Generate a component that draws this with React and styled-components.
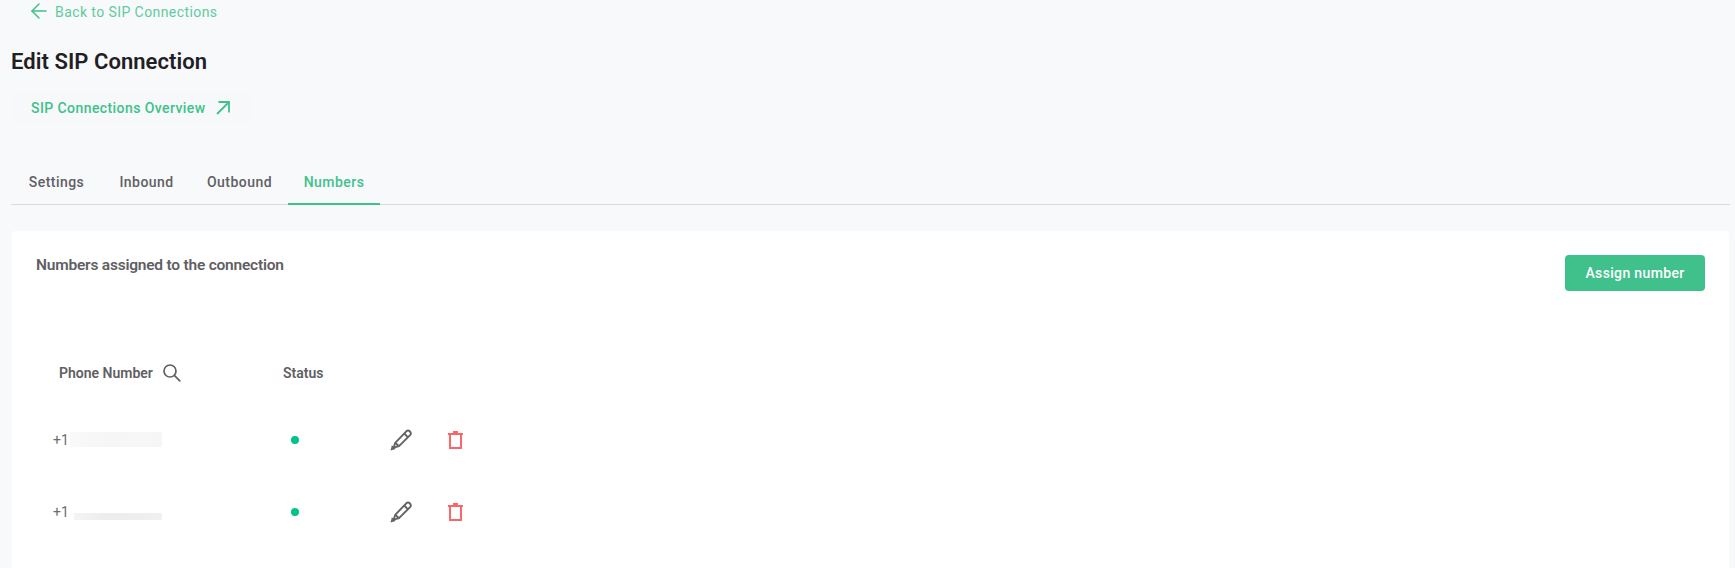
import styled, { createGlobalStyle } from 'styled-components';
import { ArrowLeft } from 'lucide-react';

const green = '#40c18c';
const grey = '#5f6063';

const GlobalStyle = createGlobalStyle`
  html, body {
    margin: 0;
    height: 100%;
    overflow: hidden;
    background: #f8f9fb;
    font-family: Roboto, "Liberation Sans", sans-serif;
  }
`;

const Page = styled.div`
  padding: 0 5px 0 11px;
  height: 568px;
  display: flex;
  flex-direction: column;
  box-sizing: border-box;
`;

const BackLink = styled.a`
  display: flex;
  align-items: center;
  gap: 4px;
  height: 24px;
  margin-left: 16px;
  color: #5fcb9f;
  font-size: 14px;
  letter-spacing: 0.42px;
  svg {
    color: ${green};
    margin-top: -3px;
  }
`;

const Title = styled.h1`
  margin: 25px 0 0;
  height: 26px;
  line-height: 26px;
  font-size: 22px;
  font-weight: 600;
  letter-spacing: 0.05px;
  color: #1f2023;
`;

const OverviewLink = styled.a`
  display: flex;
  align-items: center;
  gap: 10px;
  width: 239px;
  height: 33px;
  margin-top: 16px;
  padding-left: 20px;
  box-sizing: border-box;
  background: #f6f8f9;
  color: ${green};
  font-size: 14px;
  font-weight: 500;
  letter-spacing: 0.42px;
`;

const Tabs = styled.div`
  display: flex;
  height: 51px;
  margin-top: 29px;
  border-bottom: 1px solid #d9dadd;
  box-sizing: content-box;
`;

const Tab = styled.div`
  display: flex;
  align-items: center;
  justify-content: center;
  width: ${({ $width }) => $width}px;
  height: 52px;
  padding-top: 8px;
  box-sizing: border-box;
  font-size: 14px;
  font-weight: 500;
  letter-spacing: 0.45px;
  color: ${({ $active }) => ($active ? green : grey)};
  border-bottom: 2px solid ${({ $active }) => ($active ? green : 'transparent')};
`;

const Card = styled.section`
  flex: 1;
  margin: 26px 1px 0 1px;
  padding: 24px 24px 0 24px;
  background: #fff;
  border-radius: 4px 4px 0 0;
`;

const CardHeader = styled.div`
  display: flex;
  justify-content: space-between;
  align-items: flex-start;
`;

const CardTitle = styled.h2`
  margin: 0;
  font-size: 15.5px;
  line-height: 20px;
  font-weight: 600;
  letter-spacing: -0.22px;
  color: ${grey};
`;

const AssignButton = styled.button`
  width: 140px;
  height: 36px;
  border: 0;
  border-radius: 4px;
  background: ${green};
  color: #fff;
  font-family: inherit;
  font-size: 14px;
  font-weight: 500;
  letter-spacing: 0.35px;
`;

const Grid = styled.div`
  display: grid;
  grid-template-columns: 247px 107px 58px 58px;
  align-items: center;
`;

const HeaderRow = styled(Grid)`
  height: 40px;
  margin-top: 62px;
  font-size: 14px;
  font-weight: 600;
  color: ${grey};
`;

const PhoneHeader = styled.div`
  display: flex;
  align-items: center;
  gap: 10px;
  padding-left: 23px;
  svg {
    color: ${grey};
  }
`;

const Row = styled(Grid)`
  height: 72px;
`;

const Rows = styled.div`
  margin-top: 11px;
`;

const Phone = styled.div`
  display: flex;
  align-items: center;
  height: 22px;
  padding-left: 17px;
  font-size: 14px;
  color: #6b6c6f;
`;

const Smudge = styled.span`
  display: block;
  width: ${({ $dark }) => ($dark ? 88 : 92)}px;
  height: ${({ $dark }) => ($dark ? 7 : 15)}px;
  margin-left: ${({ $dark }) => ($dark ? 5 : 1)}px;
  margin-top: ${({ $dark }) => ($dark ? 8 : -1)}px;
  background: linear-gradient(
    90deg,
    ${({ $dark }) => ($dark ? '#f4f4f4, #ececec 40%, #eeeeee 75%, #f1f1f1' : '#f9f9f9, #f6f6f6 40%, #f7f7f7 75%, #f6f6f6')}
  );
`;

const StatusCell = styled.div`
  padding-left: 8px;
`;

const Dot = styled.span`
  display: block;
  width: 8px;
  height: 8px;
  border-radius: 50%;
  background: #00c389;
`;

const IconCell = styled.div`
  display: flex;
  align-items: center;
  svg {
    display: block;
  }
`;

const SearchGlyph = () => (
  <svg width="18" height="18" viewBox="0 0 18 18" fill="none" stroke="currentColor" strokeWidth="1.7">
    <circle cx="7" cy="7" r="6" />
    <path d="M11.3 11.3 17.3 17.3" />
  </svg>
);

const OutArrow = () => (
  <svg width="14" height="14" viewBox="0 0 14 14" fill="none" stroke="currentColor" strokeWidth="1.8">
    <path d="M1 13 13 1" />
    <path d="M2.5 1H13v10.5" />
  </svg>
);

const Pencil = () => (
  <svg width="22" height="22" viewBox="0 0 22 22" fill="none" stroke="#636365" strokeWidth="1.9" strokeLinejoin="round">
    <path d="M5.2 13.8 16.3 2.3a2.7 2.7 0 0 1 3.8 3.8L9 17.2 3.8 18.6Z" />
    <path d="M14.2 4.5l3.8 3.8M5.2 13.8 9 17.2" />
    <path d="M.5 21.5l1.4-5.2 3.8 3.8Z" fill="#636365" stroke="none" />
  </svg>
);

const Trash = () => (
  <svg width="15" height="18" viewBox="0 0 15 18" fill="none" stroke="#fd6668" strokeWidth="2">
    <path d="M0 3h15" />
    <path d="M5 1h5" />
    <path d="M2 4v13h11V4" />
  </svg>
);

const numbers = [
  { id: 1, dark: false, prefix: '+1' },
  { id: 2, dark: true, prefix: '+1' },
];

export default function App() {
  return (
    <Page>
      <GlobalStyle />
      <BackLink>
        <ArrowLeft size={24} strokeWidth={1.5} />
        Back to SIP Connections
      </BackLink>
      <Title>Edit SIP Connection</Title>
      <OverviewLink>
        SIP Connections Overview
        <OutArrow />
      </OverviewLink>
      <Tabs>
        <Tab $width={91}>Settings</Tab>
        <Tab $width={89}>Inbound</Tab>
        <Tab $width={97}>Outbound</Tab>
        <Tab $width={92} $active>Numbers</Tab>
      </Tabs>
      <Card>
        <CardHeader>
          <CardTitle>Numbers assigned to the connection</CardTitle>
          <AssignButton>Assign number</AssignButton>
        </CardHeader>
        <HeaderRow>
          <PhoneHeader>
            Phone Number
            <SearchGlyph />
          </PhoneHeader>
          <div>Status</div>
        </HeaderRow>
        <Rows>
          {numbers.map((n) => (
            <Row key={n.id}>
              <Phone>
                {n.prefix}
                <Smudge $dark={n.dark} />
              </Phone>
              <StatusCell>
                <Dot />
              </StatusCell>
              <IconCell>
                <Pencil />
              </IconCell>
              <IconCell>
                <Trash />
              </IconCell>
            </Row>
          ))}
        </Rows>
      </Card>
    </Page>
  );
}
